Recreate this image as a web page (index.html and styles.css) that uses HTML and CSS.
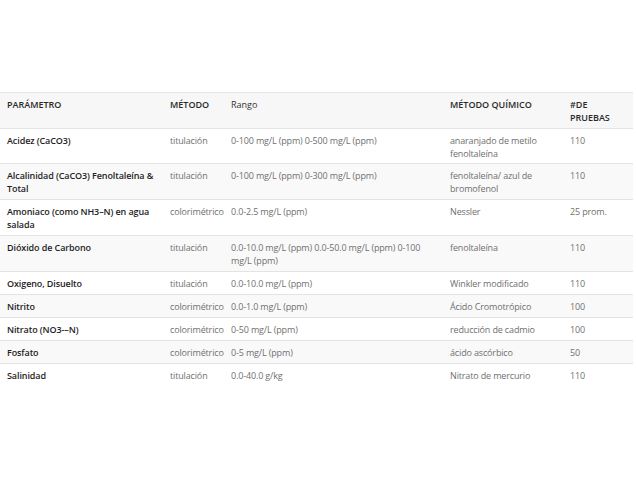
FILE: index.html
```html
<!DOCTYPE html>
<html lang="es">
<head>
<meta charset="utf-8">
<link rel="stylesheet" href="styles.css">
</head>
<body>
<div class="page">
<table class="spec">
  <colgroup>
    <col class="c1"><col class="c2"><col class="c3"><col class="c4"><col class="c5">
  </colgroup>
  <thead>
    <tr><th>PARÁMETRO</th><th>MÉTODO</th><th class="norm">Rango</th><th>MÉTODO QUÍMICO</th><th>#DE PRUEBAS</th></tr>
  </thead>
  <tbody>
    <tr><td class="p">Acidez (CaCO3)</td><td>titulación</td><td>0-100 mg/L (ppm) 0-500 mg/L (ppm)</td><td>anaranjado de metilo fenoltaleína</td><td>110</td></tr>
    <tr><td class="p">Alcalinidad (CaCO3) Fenoltaleína &amp; Total</td><td>titulación</td><td>0-100 mg/L (ppm) 0-300 mg/L (ppm)</td><td>fenoltaleína/ azul de bromofenol</td><td>110</td></tr>
    <tr><td class="p">Amoniaco (como NH3–N) en agua salada</td><td>colorimétrico</td><td>0.0-2.5 mg/L (ppm)</td><td>Nessler</td><td>25 prom.</td></tr>
    <tr><td class="p">Dióxido de Carbono</td><td>titulación</td><td>0.0-10.0 mg/L (ppm) 0.0-50.0 mg/L (ppm) 0-100 mg/L (ppm)</td><td>fenoltaleína</td><td>110</td></tr>
    <tr><td class="p">Oxigeno, Disuelto</td><td>titulación</td><td>0.0-10.0 mg/L (ppm)</td><td>Winkler modificado</td><td>110</td></tr>
    <tr><td class="p">Nitrito</td><td>colorimétrico</td><td>0.0-1.0 mg/L (ppm)</td><td>Ácido Cromotrópico</td><td>100</td></tr>
    <tr><td class="p">Nitrato (NO3-–N)</td><td>colorimétrico</td><td>0-50 mg/L (ppm)</td><td>reducción de cadmio</td><td>100</td></tr>
    <tr><td class="p">Fosfato</td><td>colorimétrico</td><td>0-5 mg/L (ppm)</td><td>ácido ascórbico</td><td>50</td></tr>
    <tr><td class="p">Salinidad</td><td>titulación</td><td>0.0-40.0 g/kg</td><td>Nitrato de mercurio</td><td>110</td></tr>
  </tbody>
</table>
</div>
</body>
</html>
```
FILE: styles.css
```css
html, body {
  margin: 0;
  padding: 0;
  background: #ffffff;
}
.page {
  padding-top: 92px;
  width: 633px;
}
.spec {
  width: 633px;
  border-collapse: collapse;
  table-layout: fixed;
  font-family: "Open Sans", "Noto Sans", sans-serif;
  font-size: 9px;
  line-height: 13px;
  color: #707070;
}
.c1 { width: 163px; }
.c2 { width: 61px; }
.c3 { width: 219px; }
.c4 { width: 120px; }
.c5 { width: 70px; }
.spec th, .spec td {
  text-align: left;
  vertical-align: top;
  padding: 5px 6px 4px 7px;
}
.spec thead tr {
  background: #f7f7f7;
  border-top: 1px solid #e6e6e6;
}
.spec th {
  font-weight: 600;
  color: #2a2a2a;
}
.spec th.norm {
  font-weight: 400;
  color: #333;
}
.spec tbody tr {
  border-top: 1px solid #e4e4e4;
}
.spec tbody tr:first-child td {
  padding-bottom: 3px;
}
.spec tbody tr:nth-child(even) {
  background: #f9f9f9;
}
.spec td {
  font-weight: 400;
  letter-spacing: -0.15px;
}
.spec td.p {
  font-weight: 600;
  color: #1e1e1e;
  letter-spacing: -0.1px;
}
```
